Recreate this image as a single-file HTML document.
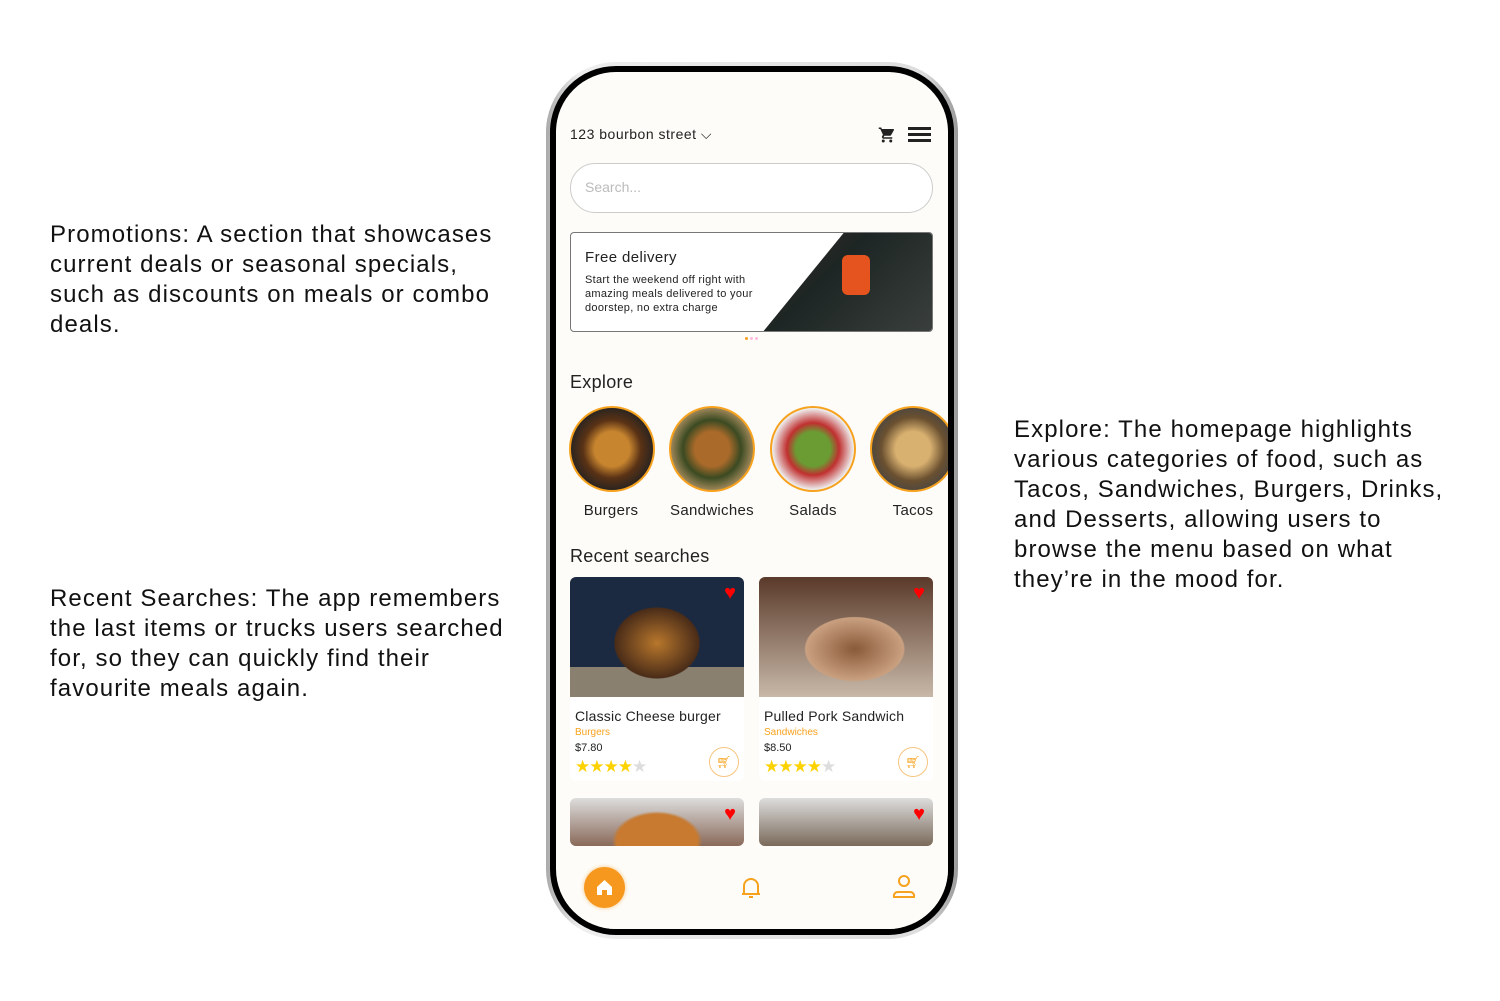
<!DOCTYPE html>
<html><head><meta charset="utf-8"><style>
*{margin:0;padding:0;box-sizing:border-box}
body{width:1500px;height:1001px;background:#fff;position:relative;font-family:"Liberation Sans",sans-serif;overflow:hidden}
.note{position:absolute;font-size:24px;line-height:30px;color:#111;letter-spacing:1.1px}
.phone{position:absolute;left:546px;top:62px;width:412px;height:877px;border-radius:70px;background:linear-gradient(90deg,#aaa,#eee 8%,#ddd 92%,#999);}
.bez{position:absolute;left:4px;top:4px;right:4px;bottom:4px;border-radius:66px;background:#000}
.scr{position:absolute;left:6px;top:6px;right:6px;bottom:6px;border-radius:60px;background:#fdfcf8;overflow:hidden}
.in{position:absolute;left:4px;top:0;width:392px;height:860px}
.abs{position:absolute}
.cat{position:absolute;top:334px;width:86px;height:86px;border-radius:50%;border:2px solid #f7a21e;overflow:hidden}
.cl{position:absolute;top:430px;font-size:15px;color:#222;text-align:center;width:100px;letter-spacing:.3px}
.card{position:absolute;width:174px;background:#fff;border-radius:6px;overflow:hidden}
.heart{position:absolute;right:8px;top:8px;color:#f00;font-size:20px;line-height:16px}
.star{color:#fcd200;font-size:17px;letter-spacing:-1px}
</style></head><body>
<div class="note" style="left:50px;top:220px;width:470px">Promotions: A section that showcases current deals or seasonal specials, such as discounts on meals or combo deals.</div>
<div class="note" style="left:50px;top:584px;width:470px">Recent Searches: The app remembers the last items or trucks users searched for, so they can quickly find their favourite meals again.</div>
<div class="note" style="left:1014px;top:415px;width:440px">Explore: The homepage highlights various categories of food, such as Tacos, Sandwiches, Burgers, Drinks, and Desserts, allowing users to browse the menu based on what they’re in the mood for.</div>
<div class="phone"><div class="bez"><div class="scr"><div class="in">
<div class="abs" style="left:10px;top:54px;font-size:14px;color:#222;letter-spacing:.5px">123 bourbon street ⌵</div>
<svg class="abs" style="left:318px;top:54px" width="18" height="18" viewBox="0 0 24 24"><path fill="#222" d="M7 18a2 2 0 1 0 0 4 2 2 0 0 0 0-4zM1 2v2h2l3.6 7.6-1.4 2.4C5 15.3 6 17 7.5 17H19v-2H7.4l1.1-2h7.4c.8 0 1.4-.4 1.7-1l3.6-6.5A1 1 0 0 0 20.4 4H5.2l-.9-2H1zm16 16a2 2 0 1 0 0 4 2 2 0 0 0 0-4z"/></svg>
<div class="abs" style="left:348px;top:55px;width:23px;height:3px;background:#222;box-shadow:0 6px 0 #222,0 12px 0 #222"></div>
<div class="abs" style="left:10px;top:91px;width:363px;height:50px;border:1px solid #ccc;border-radius:25px;background:#fff;padding:15px 14px;font-size:14px;color:#bbb">Search...</div>
<div class="abs" style="left:10px;top:160px;width:363px;height:100px;border:1px solid #777;border-radius:4px;background:#fff;overflow:hidden">
<div class="abs" style="right:0;top:0;width:170px;height:100px;background:linear-gradient(135deg,#3a2a22,#1d2624 40%,#3a3f3d);clip-path:polygon(48% 0,100% 0,100% 100%,0 100%)"></div>
<div class="abs" style="right:62px;top:22px;width:28px;height:40px;background:#e5531e;border-radius:6px"></div>
<div class="abs" style="left:14px;top:16px;font-size:15px;color:#222;letter-spacing:.4px">Free delivery</div>
<div class="abs" style="left:14px;top:40px;font-size:11px;line-height:14px;color:#222;width:195px;letter-spacing:.3px">Start the weekend off right with amazing meals delivered to your doorstep, no extra charge</div></div>
<div class="abs" style="left:185px;top:265px;width:3px;height:3px;border-radius:50%;background:#f7a21e;box-shadow:5px 0 0 #fbd,10px 0 0 #fbd"></div>
<div class="abs" style="left:10px;top:300px;font-size:18px;color:#222;letter-spacing:.3px">Explore</div>
<div class="cat" style="left:9px;background:radial-gradient(circle,#c7852f 30%,#5a3215 50%,#222 75%)"></div>
<div class="cat" style="left:109px;background:radial-gradient(circle,#a96a2a 30%,#3b4a22 50%,#c8a070 80%)"></div>
<div class="cat" style="left:210px;background:radial-gradient(circle,#6b9b33 30%,#c03030 45%,#eee 70%)"></div>
<div class="cat" style="left:310px;background:radial-gradient(circle,#d8b070 30%,#6a5030 55%,#444 80%)"></div>
<div class="cl" style="left:1px">Burgers</div><div class="cl" style="left:102px">Sandwiches</div><div class="cl" style="left:203px">Salads</div><div class="cl" style="left:303px">Tacos</div>
<div class="abs" style="left:10px;top:474px;font-size:18px;color:#222;letter-spacing:.3px">Recent searches</div>
<div class="card" style="left:10px;top:505px;height:204px"><div style="height:120px;background:radial-gradient(ellipse 60px 50px at 50% 55%,#b8772c,#4a2c18 70%,transparent 72%),linear-gradient(#1b2a40 75%,#8a8070 75%)"></div><div class="heart">♥</div>
<div class="abs" style="left:5px;top:131px;font-size:14px;color:#222;letter-spacing:.2px">Classic Cheese burger</div>
<div class="abs" style="left:5px;top:150px;font-size:10px;color:#f7a21e">Burgers</div>
<div class="abs" style="left:5px;top:165px;font-size:11px;color:#222">$7.80</div>
<div class="abs star" style="left:5px;top:180px">★★★★<span style="color:#ddd">★</span></div>
<div class="abs" style="left:139px;top:170px;width:30px;height:30px;border:1px solid #f7c580;border-radius:50%;color:#f7a21e;font-size:12px;text-align:center;line-height:28px">🛒︎</div></div>
<div class="card" style="left:199px;top:505px;height:204px"><div style="height:120px;background:radial-gradient(ellipse 70px 45px at 55% 60%,#8a5a3a,#c9a080 70%,transparent 72%),linear-gradient(#5a3a2a,#c8b8a8)"></div><div class="heart">♥</div>
<div class="abs" style="left:5px;top:131px;font-size:14px;color:#222;letter-spacing:.2px">Pulled Pork Sandwich</div>
<div class="abs" style="left:5px;top:150px;font-size:10px;color:#f7a21e">Sandwiches</div>
<div class="abs" style="left:5px;top:165px;font-size:11px;color:#222">$8.50</div>
<div class="abs star" style="left:5px;top:180px">★★★★<span style="color:#ddd">★</span></div>
<div class="abs" style="left:139px;top:170px;width:30px;height:30px;border:1px solid #f7c580;border-radius:50%;color:#f7a21e;font-size:12px;text-align:center;line-height:28px">🛒︎</div></div>
<div class="card" style="left:10px;top:726px;height:48px;background:radial-gradient(ellipse 45px 30px at 50% 90%,#c77a30 90%,transparent),linear-gradient(#ddd,#8a6a5a)"><div class="heart">♥</div></div>
<div class="card" style="left:199px;top:726px;height:48px;background:linear-gradient(#ddd,#7a6a5a)"><div class="heart">♥</div></div>
<div class="abs" style="left:0;top:774px;width:392px;height:100px;background:#fdfcf8"></div>
<div class="abs" style="left:24px;top:795px;width:41px;height:41px;border-radius:50%;background:#f7981e;box-shadow:0 0 4px #f7c580"><svg width="41" height="41" viewBox="0 0 41 41"><path fill="#fff" d="M13 20l7.5-7 7.5 7v8h-5v-5h-5v5h-5z"/></svg></div>
<svg class="abs" style="left:180px;top:804px" width="22" height="24" viewBox="0 0 22 24"><path fill="none" stroke="#f7a21e" stroke-width="2" d="M4 18V10a7 7 0 0 1 14 0v8zM2 18h18M9 21h4"/></svg>
<svg class="abs" style="left:332px;top:802px" width="24" height="26" viewBox="0 0 24 26"><circle cx="12" cy="7" r="5" fill="none" stroke="#f7a21e" stroke-width="2"/><path fill="none" stroke="#f7a21e" stroke-width="2" d="M2 23a4 4 0 0 1 4-5h12a4 4 0 0 1 4 5z"/></svg>
</div></div></div></div>
</body></html>
